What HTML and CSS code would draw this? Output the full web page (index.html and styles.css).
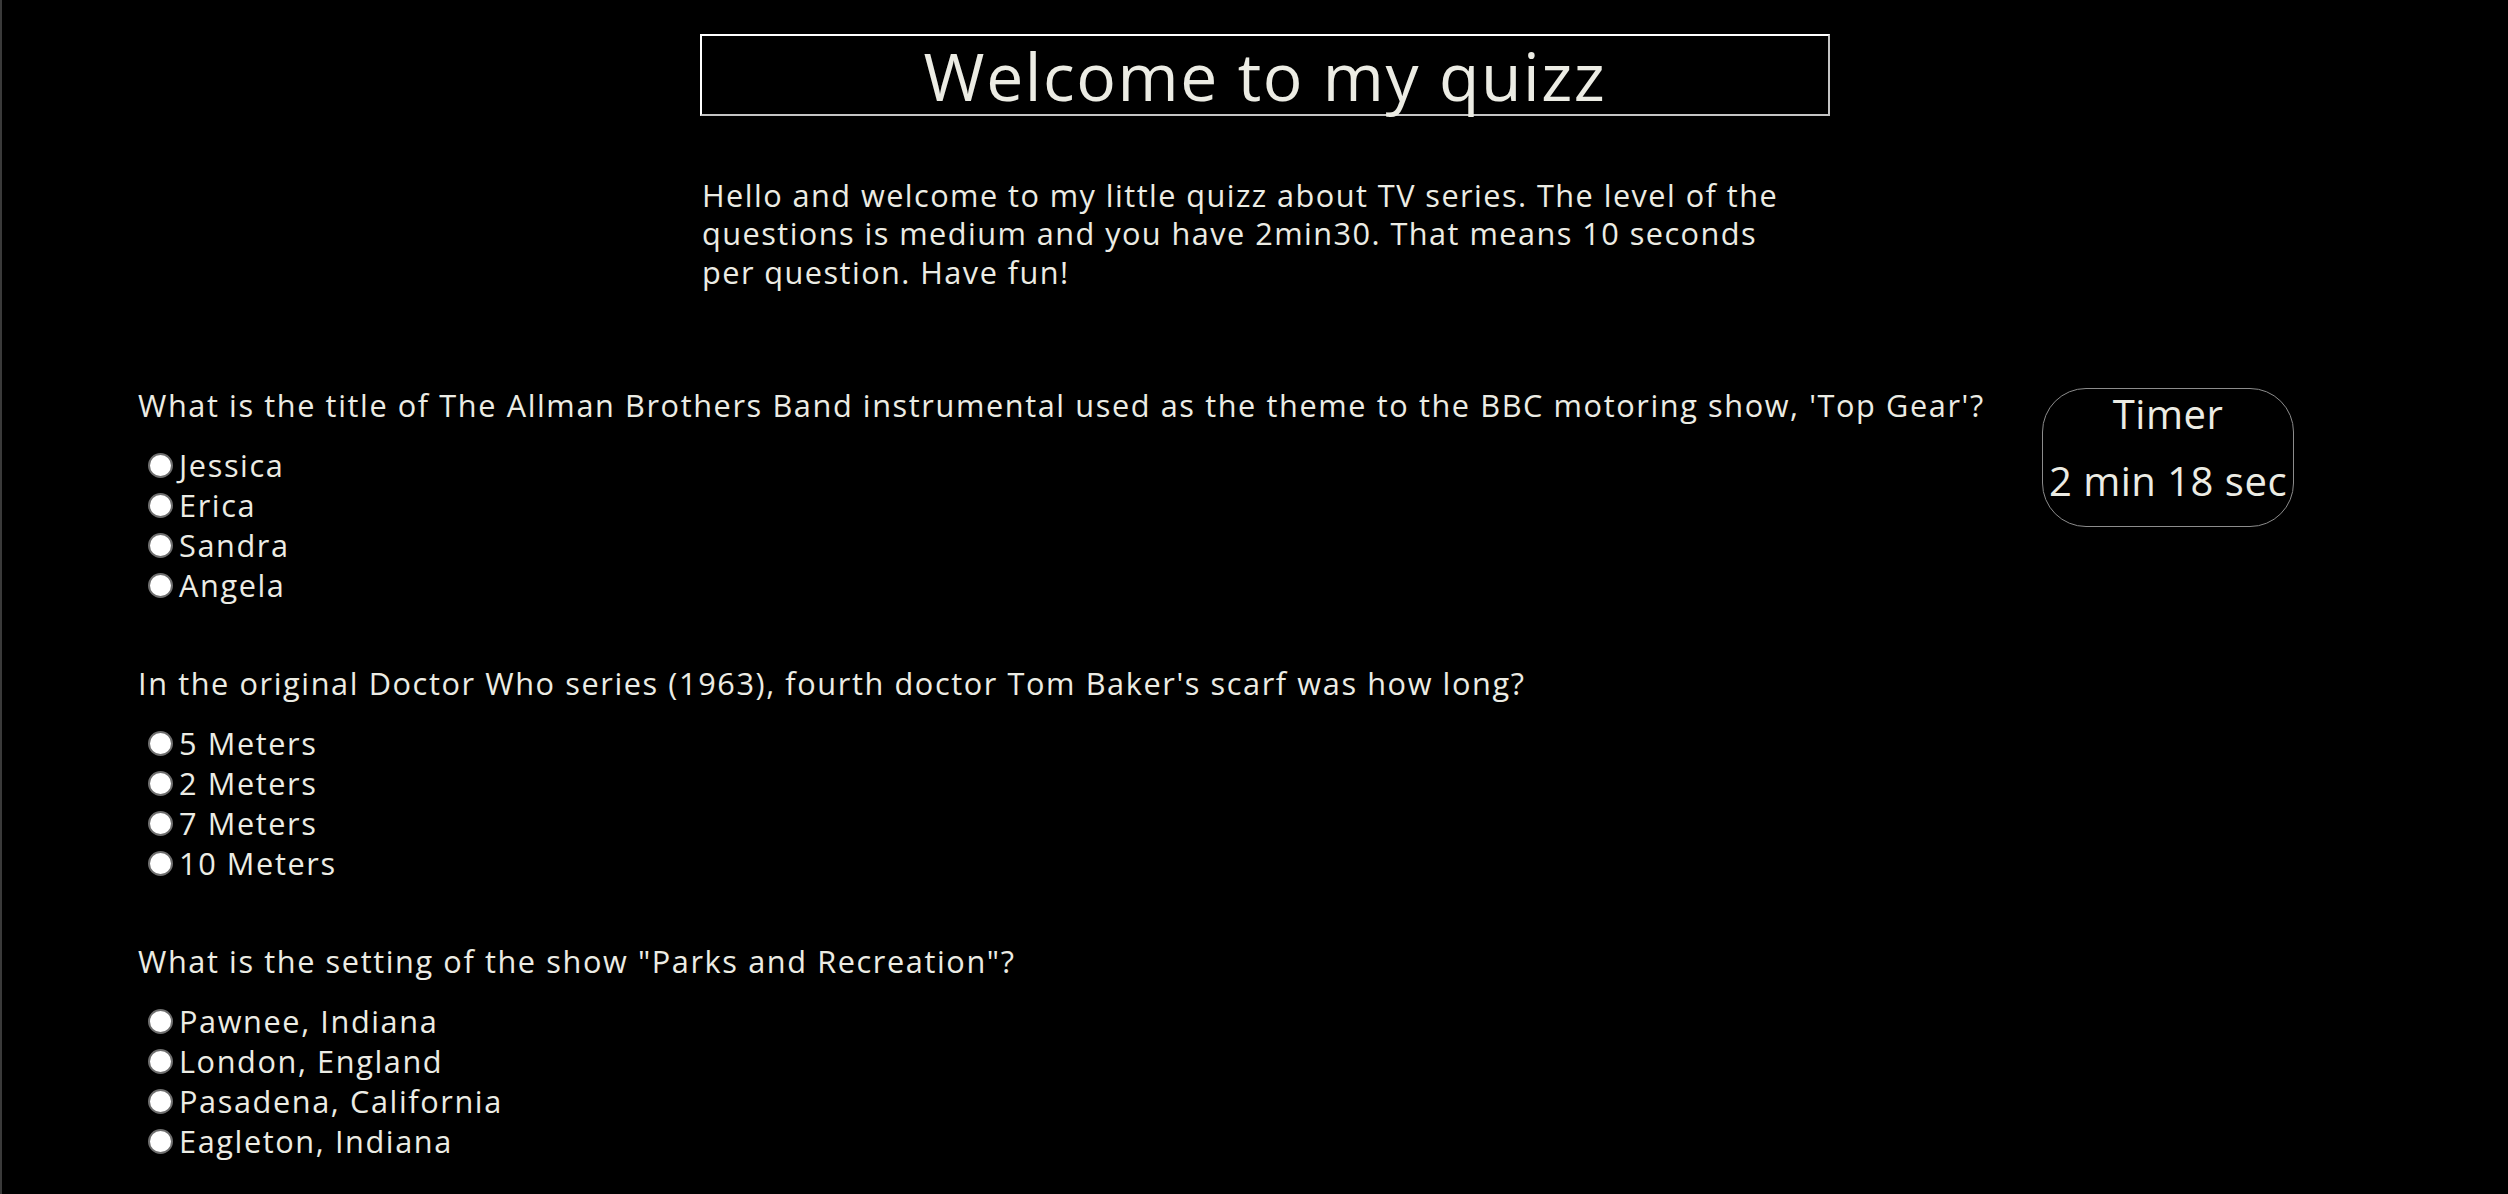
FILE: index.html
```html
<!DOCTYPE html>
<html lang="en">
<head>
<meta charset="utf-8">
<title>Quizz</title>
<link rel="stylesheet" href="styles.css">
</head>
<body>
<header class="intro">
  <h1 class="title">Welcome to my quizz</h1>
  <p class="lead">Hello and welcome to my little quizz about TV series. The level of the questions is medium and you have 2min30. That means 10 seconds per question. Have fun!</p>
</header>
<main class="quiz">
  <form class="questions">
    <section class="question">
      <p class="q-text">What is the title of The Allman Brothers Band instrumental used as the theme to the BBC motoring show, 'Top Gear'?</p>
      <label class="option"><input type="radio" name="q1" class="radio">Jessica</label>
      <label class="option"><input type="radio" name="q1" class="radio">Erica</label>
      <label class="option"><input type="radio" name="q1" class="radio">Sandra</label>
      <label class="option"><input type="radio" name="q1" class="radio">Angela</label>
    </section>
    <section class="question">
      <p class="q-text">In the original Doctor Who series (1963), fourth doctor Tom Baker's scarf was how long?</p>
      <label class="option"><input type="radio" name="q2" class="radio">5 Meters</label>
      <label class="option"><input type="radio" name="q2" class="radio">2 Meters</label>
      <label class="option"><input type="radio" name="q2" class="radio">7 Meters</label>
      <label class="option"><input type="radio" name="q2" class="radio">10 Meters</label>
    </section>
    <section class="question">
      <p class="q-text">What is the setting of the show "Parks and Recreation"?</p>
      <label class="option"><input type="radio" name="q3" class="radio">Pawnee, Indiana</label>
      <label class="option"><input type="radio" name="q3" class="radio">London, England</label>
      <label class="option"><input type="radio" name="q3" class="radio">Pasadena, California</label>
      <label class="option"><input type="radio" name="q3" class="radio">Eagleton, Indiana</label>
    </section>
  </form>
  <aside class="timer">
    <div class="timer-label">Timer</div>
    <div class="timer-value">2 min 18 sec</div>
  </aside>
</main>
</body>
</html>
```
FILE: styles.css
```css
html {
  background: #000;
  border-left: 2px solid #3a3a3a;
  min-height: 100%;
}
body {
  margin: 0;
  background: #000;
  color: #ecece4;
  font-family: "Open Sans", "Noto Sans", sans-serif;
  font-weight: 400;
  font-size: 30.7px;
  letter-spacing: 1.6px;
  overflow: hidden;
}
.intro {
  width: 1130px;
  margin: 0 0 0 698px;
  padding-top: 34px;
}
.title {
  margin: 0;
  height: 82px;
  box-sizing: border-box;
  border: 2px solid;
  border-color: #ffffff #c4c4c4 #c4c4c4 #ffffff;
  font-size: 66px;
  font-weight: 400;
  letter-spacing: 1.6px;
  line-height: 78px;
  text-align: center;
}
.lead {
  margin: 60px 0 0;
  padding-left: 2px;
  max-width: 1098px;
  letter-spacing: 1.45px;
  line-height: 38.4px;
}
.quiz {
  display: flex;
  align-items: flex-start;
  padding: 0 214px 0 136px;
  margin-top: 94px;
}
.questions {
  flex: 1;
  display: flex;
  flex-direction: column;
  gap: 58px;
}
.question {
  display: flex;
  flex-direction: column;
}
.q-text {
  margin: 0 0 20px;
  line-height: 40px;
  white-space: nowrap;
}
.option {
  display: flex;
  align-items: center;
  height: 40px;
  line-height: 40px;
}
.radio {
  appearance: none;
  -webkit-appearance: none;
  box-sizing: border-box;
  width: 25px;
  height: 25px;
  margin: 0 6px 0 10px;
  border-radius: 50%;
  background: #fff;
  border: 2px solid #6e6e6e;
  flex: none;
}
.timer {
  flex: none;
  width: 252px;
  height: 139px;
  box-sizing: border-box;
  margin-top: 3px;
  border: 1px solid #8c8c8c;
  border-radius: 44px;
  padding: 0 0 20px;
  display: flex;
  flex-direction: column;
  align-items: center;
  font-size: 40px;
  letter-spacing: 0.5px;
}
.timer-label {
  line-height: 50px;
}
.timer-value {
  margin-top: 17px;
  line-height: 50px;
  white-space: nowrap;
}
```
